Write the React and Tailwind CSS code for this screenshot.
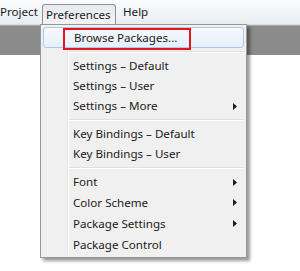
import React from 'react';

const items = [
  { label: 'Browse Packages...', active: true, h: 'h-[21px]' },
  { sep: true },
  { label: 'Settings – Default' },
  { label: 'Settings – User' },
  { label: 'Settings – More', sub: true },
  { sep: true },
  { label: 'Key Bindings – Default' },
  { label: 'Key Bindings – User' },
  { sep: true },
  { label: 'Font', sub: true },
  { label: 'Color Scheme', sub: true, h: 'h-[21px]' },
  { label: 'Package Settings', sub: true, h: 'h-[21px]' },
  { label: 'Package Control', h: 'h-[21px]' },
];

function Arrow() {
  return (
    <svg width="4" height="7" viewBox="0 0 4 7" className="shrink-0">
      <path d="M0 0 L4 3.5 L0 7 Z" fill="#1a1a1a" />
    </svg>
  );
}

export default function App() {
  return (
    <div
      className="relative w-[300px] h-[271px] overflow-hidden bg-white text-[11.6px] text-[#1b1b1b]"
      style={{ fontFamily: '"Noto Sans", "Open Sans", sans-serif' }}
    >
      {/* Menu bar */}
      <div className="h-[25px] flex items-center bg-gradient-to-b from-[#fbfcfd] to-[#e9edf2] border-b border-[#d8dde4]">
        <span className="ml-0 w-[42px]">Project</span>
        <span className="h-[21px] mt-[4px] w-[74px] pl-[3px] flex items-center border border-[#8d9197] border-b-0 rounded-t-[3px] bg-gradient-to-b from-[#e6eaef] to-[#f3f4f6]">
          Preferences
        </span>
        <span className="ml-[7px]">Help</span>
      </div>

      {/* Gray band */}
      <div className="h-[30px] bg-[#8b8b8b] border-t border-[#a8a8a8]" />

      {/* Dropdown */}
      <div className="absolute left-[40px] top-[24px] w-[207px] border border-[#979797] bg-[#f0f0f0] p-[2px] shadow-[3px_3px_3px_rgba(0,0,0,0.4)]">
        <div className="absolute left-[26px] top-[2px] bottom-[2px] w-[2px] border-l border-[#e2e3e3] border-r border-r-white" />
        {items.map((it, i) =>
          it.sep ? (
            <div key={i} className="h-[8px] flex items-center">
              <div className="ml-[25px] flex-1 h-[2px] border-t border-[#e0e0e0] border-b border-b-white" />
            </div>
          ) : (
            <div
              key={i}
              className={`relative flex items-center justify-between pl-[30px] pr-[7px] ${it.h || 'h-5'} ${
                it.active
                  ? 'border border-[#a9cbee] rounded-[3px] bg-gradient-to-b from-[#f6f9fd] to-[#e6effa] pl-[29px] pr-[6px]'
                  : ''
              }`}
            >
              <span>{it.label}</span>
              {it.sub && <Arrow />}
            </div>
          )
        )}
      </div>

      {/* Annotation box */}
      <div className="absolute left-[63px] top-[28px] w-[128px] h-[22px] border-2 border-[#e8141b]" />
    </div>
  );
}
